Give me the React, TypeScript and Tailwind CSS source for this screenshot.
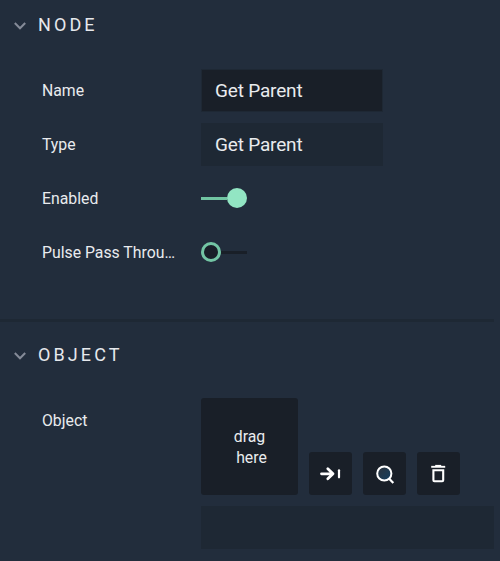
import type { ReactNode } from "react";

function Header({ children }: { children: ReactNode }) {
  return (
    <div className="flex h-[50px] items-center pl-[14px] text-[18px] leading-[22px] tracking-[3.1px] text-[#e6e8ec]">
      <svg className="mt-px mr-[12px] h-3 w-3" viewBox="0 0 12 12" fill="none" stroke="#858b98" strokeWidth="2">
        <path d="M.8 3 6 8.3 11.2 3" />
      </svg>
      <h2>{children}</h2>
    </div>
  );
}

function Row({ label, children }: { label: string; children: ReactNode }) {
  return (
    <div className="flex h-[54px] items-center pl-[42px]">
      <div className="w-[159px] pt-px text-[15.8px] leading-5 whitespace-nowrap">{label}</div>
      {children}
    </div>
  );
}

function Action({ label, children }: { label: string; children: ReactNode }) {
  return (
    <button aria-label={label} className="flex h-[43px] w-[43px] items-center justify-center rounded-[3px] bg-[#191f28]">
      <svg width="43" height="43" viewBox="0 0 43 43" fill="none" stroke="#fff">
        {children}
      </svg>
    </button>
  );
}

export default function App() {
  return (
    <main className="flex h-[561px] w-[500px] flex-col overflow-hidden bg-[#222d3c] font-[Roboto,sans-serif] text-[#e9ebee]">
      <section className="h-[319px]">
        <Header>NODE</Header>
        <div className="pt-[13px]">
          <Row label="Name">
            <div className="flex h-[43px] w-[182px] items-center border border-[#1e2834] bg-[#191f28] pt-[2px] pl-[13px] text-[19px] tracking-[-0.18px]">Get Parent</div>
          </Row>
          <Row label="Type">
            <div className="flex h-[43px] w-[182px] items-center bg-[#1e2834] pt-[2px] pl-[14px] text-[19px] tracking-[-0.18px]">Get Parent</div>
          </Row>
          <Row label="Enabled">
            <div className="flex h-5 w-[46px] items-center">
              <div className="h-[3px] w-[26px] bg-[#71c4a2]" />
              <div className="h-5 w-5 rounded-full bg-[#92e5c3]" />
            </div>
          </Row>
          <Row label="Pulse Pass Throu…">
            <div className="flex h-5 w-[46px] items-center">
              <div className="h-5 w-5 shrink-0 rounded-full border-[3px] border-[#73c5a4] bg-[#191f28]" />
              <div className="h-[3px] w-[26px] bg-[#191f28]" />
            </div>
          </Row>
        </div>
      </section>
      <div className="h-[3px] w-[494px] bg-[#1e2834]" />
      <section className="pt-[8px]">
        <Header>OBJECT</Header>
        <div className="flex pt-[18px] pl-[42px]">
          <div className="w-[159px] pt-[13px] text-[15.8px] leading-5">Object</div>
          <div>
            <div className="flex items-end gap-[11px]">
              <div className="flex h-[97px] w-[97px] flex-col items-center justify-center rounded-[3px] bg-[#191f28] pt-px text-[15.8px] leading-[21.5px]">
                <span>drag</span>
                <span className="pl-1">here</span>
              </div>
              <Action label="Select">
                <path d="M12.5 21.8h11.5M18.8 16.8l5.2 5-5.2 5" strokeWidth="2.8" strokeLinecap="round" strokeLinejoin="round" />
                <path d="M30 18.3v7" strokeWidth="2.2" strokeLinecap="round" />
              </Action>
              <Action label="Find">
                <defs>
                  <linearGradient id="lens" x1="0" y1="0" x2="1" y2="1">
                    <stop offset="0.2" stopColor="#293542" />
                    <stop offset="1" stopColor="#123e60" />
                  </linearGradient>
                </defs>
                <circle cx="21.3" cy="21.5" r="7.1" fill="url(#lens)" strokeWidth="2" />
                <path d="m26 26.5 4.3 4.5" strokeWidth="2.2" />
              </Action>
              <Action label="Delete">
                <path d="M14.2 14.8h14" strokeWidth="1.9" />
                <path d="M18.2 13.6h6" strokeWidth="1.4" />
                <path d="M16.4 18.2h9.8v10q0 1-1 1h-7.8q-1 0-1-1z" strokeWidth="2.1" />
              </Action>
            </div>
            <div className="mt-[11px] h-[43px] w-[293px] bg-[#1e2834]" />
          </div>
        </div>
      </section>
    </main>
  );
}
